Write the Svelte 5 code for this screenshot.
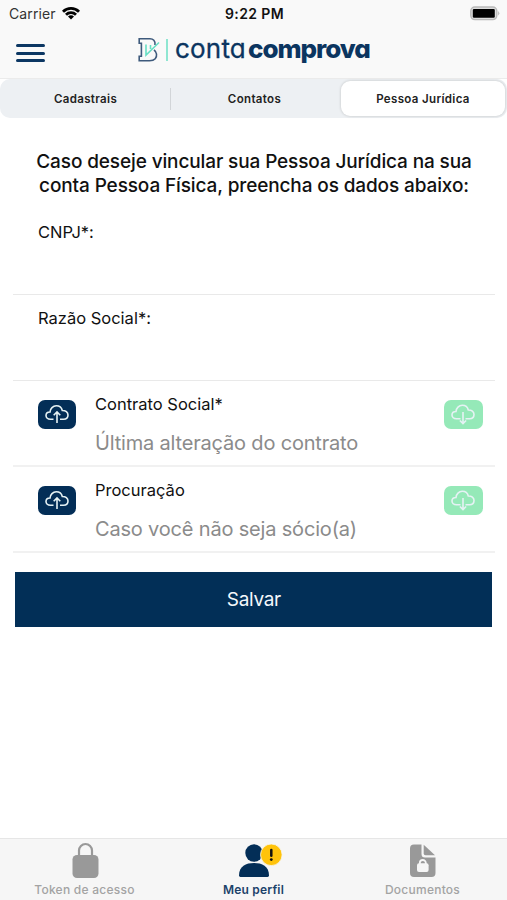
<script>
  let selected = 2
  let current = 1

  const segments = ['Cadastrais', 'Contatos', 'Pessoa Jurídica']

  const fields = [
    { id: 'cnpj', label: 'CNPJ*:' },
    { id: 'razao', label: 'Razão Social*:' },
  ]

  const uploads = [
    { title: 'Contrato Social*', hint: 'Última alteração do contrato' },
    { title: 'Procuração', hint: 'Caso você não seja sócio(a)' },
  ]

  const tabs = ['Token de acesso', 'Meu perfil', 'Documentos']

  let values = { cnpj: '', razao: '' }
</script>

<div class="screen">
  <header>
    <div class="status">
      <div class="carrier">
        <span>Carrier</span>
        <svg width="18" height="14" viewBox="0 0 18 14">
          <path d="M0 4.7 A12.7 12.7 0 0 1 18 4.7 L16 6.7 A10 10 0 0 0 2 6.7Z" />
          <path d="M3 7.7 A8.5 8.5 0 0 1 15 7.7 L13 9.7 A5.7 5.7 0 0 0 5 9.7Z" />
          <path d="M6 10.6 A4.2 4.2 0 0 1 12 10.6 L9 13.6Z" />
        </svg>
      </div>
      <time>9:22 PM</time>
      <svg class="battery" width="31" height="15" viewBox="0 0 31 15">
        <rect x="1.8" y="1" width="26" height="12.6" rx="4" fill="#ddd" stroke="#b9b9b9" stroke-width="1.4" />
        <rect x="3.8" y="2.9" width="22" height="8.8" rx="1.2" />
        <path d="M29.2 5 Q31.4 7.3 29.2 9.6Z" fill="#b5b5b5" />
      </svg>
    </div>
    <div class="brand">
      <button class="menu" aria-label="Menu">
        <i></i><i></i><i></i>
      </button>
      <div class="logo">
        <svg width="30" height="26" viewBox="0 0 30 26" fill="none">
          <path
            d="M17 8 C17.6 3.8 15 1.8 12 1.8 H1.2 V6.3 H3.4 V19.3 H1.2 V23.8 H11.5 C17 23.8 19 20.5 18.5 17 C18.2 15 17.3 13.8 16 12.8"
            stroke="#3e5a7c"
            stroke-width="1.6"
          />
          <path d="M8 7.5 V18 L21 5.5 M12.5 8 V12" stroke="#67dfc4" stroke-width="1.6" />
          <path d="M29 2 V24" stroke="#7de3cb" stroke-width="1.7" />
        </svg>
        <span class="conta">conta</span><span class="comprova">comprova</span>
      </div>
    </div>
  </header>

  <nav class="segments">
    {#each segments as segment, i}
      <button class:selected={selected === i} on:click={() => (selected = i)}>
        {segment}
      </button>
    {/each}
  </nav>

  <main>
    <h1>
      <span class="line">Caso deseje vincular sua Pessoa Jurídica na sua</span>
      <span class="line">conta Pessoa Física, preencha os dados abaixo:</span>
    </h1>

    {#each fields as field}
      <div class="field">
        <label for={field.id}>{field.label}</label>
        <input id={field.id} bind:value={values[field.id]} />
      </div>
    {/each}

    {#each uploads as upload}
      <div class="upload">
        <button class="square" aria-label="Enviar arquivo">
          <svg width="24" height="20" viewBox="0 0 24 20">
            <path d="M8.5 15.2 H5.5 C2.7 15.2 1 13.6 1 11.5 C1 9.4 2.8 8 5 8 C5.2 4.4 8 1.8 11.3 1.8 C14.5 1.8 16.6 3.6 17.3 6.5 C20.6 6.4 23 8.3 23 11 C23 13.5 21.2 15.2 18.5 15.2 H15" />
            <path d="M12 19 V8.5 M8.7 11.3 L12 8 L15.3 11.3" />
          </svg>
        </button>
        <div class="info">
          <p class="title">{upload.title}</p>
          <p class="hint">{upload.hint}</p>
        </div>
        <button class="square green" aria-label="Baixar arquivo">
          <svg width="24" height="22" viewBox="0 0 24 22">
            <path d="M9.5 15.7 H5.5 C2.7 15.7 1 14.1 1 12 C1 9.9 2.8 8.5 5 8.5 C5.2 4.9 8 2.3 11.3 2.3 C14.5 2.3 16.6 4.1 17.3 7 C20.6 6.9 23 8.8 23 11.5 C23 14 21.2 15.7 18.5 15.7 H14.5" />
            <path d="M12 9 V20 M8.9 17.5 L12 20.6 L15.1 17.5" />
          </svg>
        </button>
      </div>
    {/each}

    <button class="save">Salvar</button>
  </main>

  <footer>
    {#each tabs as tab, i}
      <button class:current={current === i} on:click={() => (current = i)}>
        {#if i === 0}
          <svg width="46" height="38" viewBox="0 0 46 38">
            <path d="M17 14 V8.5 A6.5 6.5 0 0 1 30 8.5 V14" fill="none" stroke="currentColor" stroke-width="2.2" />
            <rect x="10.5" y="13" width="26" height="23" rx="4.5" />
          </svg>
        {:else if i === 1}
          <svg width="46" height="38" viewBox="0 0 46 38">
            <circle cx="23" cy="11" r="8.7" />
            <path d="M8 33.6 C8 24 15 21 23 21 S38 24 38 33.6 Q38 35 36.6 35 H9.4 Q8 35 8 33.6Z" />
            <circle cx="40.3" cy="12.8" r="10.8" fill="#ffc30b" stroke="#f6f6f6" stroke-width="0.8" />
            <path d="M40.3 8 V13.8" stroke="#111" stroke-width="2.5" stroke-linecap="round" />
            <circle cx="40.3" cy="17.6" r="1.4" fill="#111" />
          </svg>
        {:else}
          <svg width="46" height="38" viewBox="0 0 46 38">
            <path d="M14 2.5 H21.5 V12 Q21.5 15.5 25 15.5 H35.5 V31 Q35.5 35 31.5 35 H14 Q10 35 10 31 V6.5 Q10 2.5 14 2.5Z" />
            <path d="M23.7 2.8 L35 13.3 H25.5 Q23.7 13.3 23.7 11.5Z" />
            <path d="M19.8 22.5 V21 A3 3 0 0 1 25.8 21 V22.5" fill="none" stroke="#f6f6f6" stroke-width="1.8" />
            <rect x="17" y="21.3" width="11.6" height="8.6" rx="2" fill="#f6f6f6" />
          </svg>
        {/if}
        <span>{tab}</span>
      </button>
    {/each}
  </footer>
</div>

<style>
  :global(body) {
    background: #fff;
  }
  .screen {
    display: flex;
    flex-direction: column;
    height: 900px;
    font-family: Inter, 'Liberation Sans', sans-serif;
    color: #111;
  }
  button {
    padding: 0;
    border: none;
    background: none;
    font-family: inherit;
    cursor: pointer;
  }
  svg {
    display: block;
  }
  header {
    box-sizing: border-box;
    height: 79px;
    background: #f9f9f9;
    border-bottom: 1px solid #ebebeb;
  }
  .status {
    display: grid;
    grid-template-columns: 1fr auto 1fr;
    align-items: center;
    height: 27px;
    padding: 0 7px 0 9px;
    font-size: 14px;
  }
  .carrier {
    display: flex;
    align-items: center;
    gap: 6px;
    color: #333;
    letter-spacing: 0.1px;
  }
  .carrier svg {
    margin-top: -2px;
    fill: #000;
  }
  time {
    font-weight: 600;
    letter-spacing: 0.4px;
  }
  .battery {
    justify-self: end;
  }
  .brand {
    display: flex;
    align-items: flex-start;
    height: 51px;
    padding-left: 16px;
  }
  .menu {
    display: grid;
    gap: 4.5px;
    width: 29px;
    margin-top: 17px;
  }
  .menu i {
    height: 3px;
    border-radius: 2px;
    background: #0c3763;
  }
  .logo {
    display: flex;
    margin: 10px 0 0 93px;
    color: #0b3560;
    font-size: 26px;
    line-height: 24px;
    font-feature-settings: 'cv11';
  }
  .conta {
    margin-left: 7px;
    letter-spacing: 0.2px;
    -webkit-text-stroke: 0.3px #0b3560;
  }
  .comprova {
    margin-left: 2px;
    font-weight: 800;
    letter-spacing: -1.05px;
  }
  .segments {
    display: grid;
    grid-template-columns: repeat(3, 1fr);
    height: 39px;
    border-radius: 10px;
    background: #edf0f3;
  }
  .segments button {
    position: relative;
    color: #222;
    font-size: 11.5px;
    font-weight: 600;
    letter-spacing: 0.35px;
  }
  .segments button:not(.selected) {
    padding-left: 2px;
  }
  .segments button:first-child::after {
    content: '';
    position: absolute;
    right: -2px;
    top: 9px;
    width: 1px;
    height: 22px;
    background: #d2d5d8;
  }
  .segments .selected {
    margin: 2px 2px 2px 3px;
    border-radius: 9px;
    background: #fff;
    box-shadow: 0 0 3px rgba(0, 0, 0, 0.2);
  }
  main {
    flex: 1;
    padding: 32px 12px 0 13px;
  }
  h1 {
    margin: 0;
    font-size: 19px;
    font-weight: 500;
    line-height: 23.5px;
    letter-spacing: -0.12px;
    text-align: center;
  }
  .line {
    display: block;
    white-space: nowrap;
  }
  .field {
    box-sizing: border-box;
    height: 85.5px;
    padding: 12px 25px 0;
    border-bottom: 1.5px solid #e9e9e9;
  }
  h1 + .field {
    height: 98px;
    padding-top: 24px;
  }
  label {
    display: block;
    font-size: 16.5px;
    line-height: 22px;
  }
  input {
    width: 100%;
    padding: 0;
    border: none;
    outline: none;
    font: inherit;
    font-size: 19px;
  }
  .upload {
    box-sizing: border-box;
    display: flex;
    height: 86px;
    padding: 19px 12.5px 0 24.5px;
    border-bottom: 2px solid #f1f1f1;
  }
  .square {
    display: grid;
    place-items: center;
    width: 38.5px;
    height: 29.5px;
    border-radius: 7px;
    background: #032e57;
  }
  .green {
    background: #95e9b8;
  }
  .square svg {
    fill: none;
    stroke: #e6f2f4;
    stroke-width: 1.6;
  }
  .info {
    flex: 1;
    margin: -7px 0 0 19px;
  }
  p {
    margin: 0;
    white-space: nowrap;
  }
  .title {
    font-size: 16.5px;
    line-height: 22px;
  }
  .hint {
    margin-top: 15px;
    color: #8b8b8b;
    font-size: 20px;
    line-height: 26px;
    letter-spacing: -0.18px;
  }
  .save {
    display: block;
    width: 477px;
    height: 55px;
    margin: 19px 0 0 2.4px;
    background: #022f57;
    color: #f4f8fb;
    font-size: 19px;
    letter-spacing: -0.3px;
  }
  footer {
    box-sizing: border-box;
    display: grid;
    grid-template-columns: repeat(3, 1fr);
    height: 62px;
    padding-top: 3px;
    border-top: 1px solid #e6e6e6;
    background: #f6f6f6;
  }
  footer button {
    display: flex;
    flex-direction: column;
    align-items: center;
    color: #999;
    font-size: 12px;
    font-weight: 500;
    letter-spacing: 0.25px;
  }
  footer svg {
    overflow: visible;
    fill: currentColor;
  }
  footer span {
    margin-top: 2px;
    line-height: 15px;
    color: #a3a3a3;
  }
  footer .current {
    color: #032e57;
    font-weight: 600;
    letter-spacing: 0.2px;
  }
  .current span {
    color: #1c426a;
  }
</style>
